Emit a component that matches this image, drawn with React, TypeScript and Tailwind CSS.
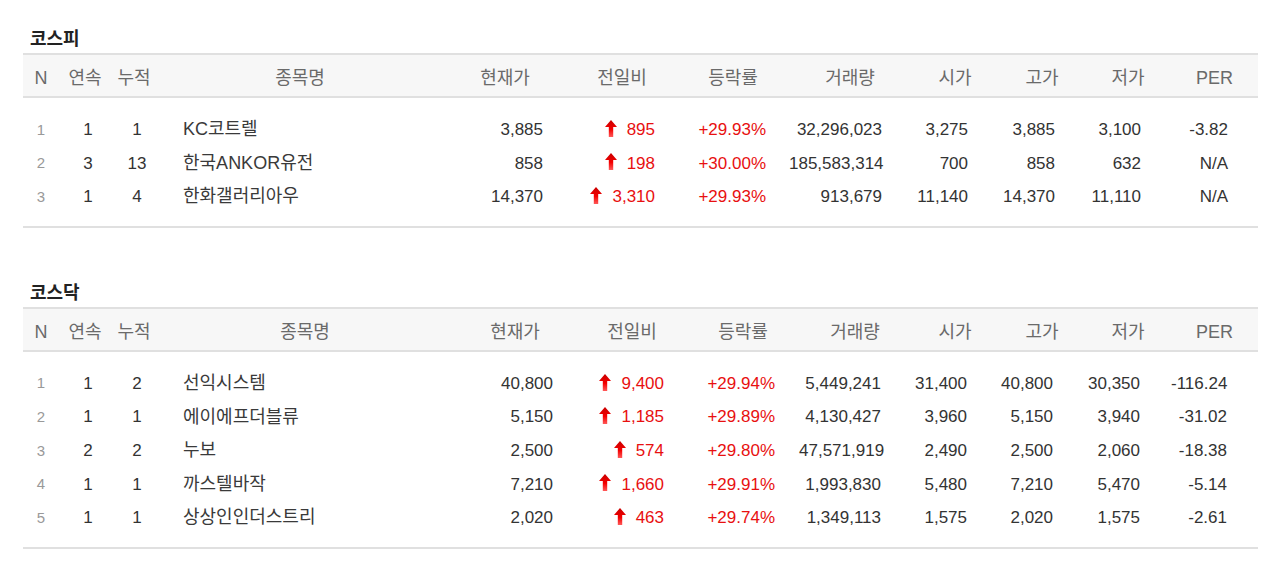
type Row = {
  n: number
  streak: number
  total: number
  name: string
  price: string
  diff: string
  rate: string
  volume: string
  open: string
  high: string
  low: string
  per: string
}

const kospi: Row[] = [
  { n: 1, streak: 1, total: 1, name: "KC코트렐", price: "3,885", diff: "895", rate: "+29.93%", volume: "32,296,023", open: "3,275", high: "3,885", low: "3,100", per: "-3.82" },
  { n: 2, streak: 3, total: 13, name: "한국ANKOR유전", price: "858", diff: "198", rate: "+30.00%", volume: "185,583,314", open: "700", high: "858", low: "632", per: "N/A" },
  { n: 3, streak: 1, total: 4, name: "한화갤러리아우", price: "14,370", diff: "3,310", rate: "+29.93%", volume: "913,679", open: "11,140", high: "14,370", low: "11,110", per: "N/A" },
]

const kosdaq: Row[] = [
  { n: 1, streak: 1, total: 2, name: "선익시스템", price: "40,800", diff: "9,400", rate: "+29.94%", volume: "5,449,241", open: "31,400", high: "40,800", low: "30,350", per: "-116.24" },
  { n: 2, streak: 1, total: 1, name: "에이에프더블류", price: "5,150", diff: "1,185", rate: "+29.89%", volume: "4,130,427", open: "3,960", high: "5,150", low: "3,940", per: "-31.02" },
  { n: 3, streak: 2, total: 2, name: "누보", price: "2,500", diff: "574", rate: "+29.80%", volume: "47,571,919", open: "2,490", high: "2,500", low: "2,060", per: "-18.38" },
  { n: 4, streak: 1, total: 1, name: "까스텔바작", price: "7,210", diff: "1,660", rate: "+29.91%", volume: "1,993,830", open: "5,480", high: "7,210", low: "5,470", per: "-5.14" },
  { n: 5, streak: 1, total: 1, name: "상상인인더스트리", price: "2,020", diff: "463", rate: "+29.74%", volume: "1,349,113", open: "1,575", high: "2,020", low: "1,575", per: "-2.61" },
]

const headers = ["N", "연속", "누적", "종목명", "현재가", "전일비", "등락률", "거래량", "시가", "고가", "저가", "PER"]

function UpArrow() {
  return (
    <svg width="12" height="17" viewBox="0 0 12 17" className="mr-[10px] -mt-[3px] shrink-0">
      <defs>
        <linearGradient id="upArrowGrad" x1="0" y1="0" x2="0" y2="1">
          <stop offset="0%" stopColor="#c80000" />
          <stop offset="55%" stopColor="#f40000" />
          <stop offset="100%" stopColor="#ff5a5a" />
        </linearGradient>
      </defs>
      <path d="M6 0 L12 7 L8.2 7 L8.2 17 L3.8 17 L3.8 7 L0 7 Z" fill="url(#upArrowGrad)" />
    </svg>
  )
}

type TableProps = {
  title: string
  rows: Row[]
  cols: string
  pads: string[]
  top: string
}

function StockTable({ title, rows, cols, pads, top }: TableProps) {
  return (
    <section className={top}>
      <h2 className="h-6 pl-[7px] pt-[2px] text-[18px] leading-6 font-bold text-[#222] mb-1">{title}</h2>
      <div className="border-y-2 border-[#e0e0e0] bg-[#f7f7f7]">
        <div className={`grid ${cols} h-[41px] items-center pt-[6px] text-[18px] text-[#6a6a6a]`}>
          {headers.map((h) => (
            <div key={h} className="text-center">
              {h}
            </div>
          ))}
        </div>
      </div>
      <div className="pt-[13px] pb-[14px] border-b-2 border-[#e0e0e0]">
        {rows.map((r) => (
          <div key={r.n} className={`grid ${cols} h-[33.6px] items-center pt-[4px] text-[17px] text-[#333]`}>
            <div className="text-center text-[15px] text-[#999]">{r.n}</div>
            <div className="text-center pl-[6px]">{r.streak}</div>
            <div className="text-center pl-[6px]">{r.total}</div>
            <div className="pl-[26px] text-[18px] text-[#3a3a3a]">{r.name}</div>
            <div className={`text-right ${pads[0]}`}>{r.price}</div>
            <div className={`flex items-center justify-end text-[#e81010] ${pads[1]}`}>
              <UpArrow />
              <span>{r.diff}</span>
            </div>
            <div className={`text-right text-[#e81010] ${pads[2]}`}>{r.rate}</div>
            <div className={`text-right ${pads[3]}`}>{r.volume}</div>
            <div className={`text-right ${pads[4]}`}>{r.open}</div>
            <div className={`text-right ${pads[5]}`}>{r.high}</div>
            <div className={`text-right ${pads[6]}`}>{r.low}</div>
            <div className={`text-right ${pads[7]}`}>{r.per}</div>
          </div>
        ))}
      </div>
    </section>
  )
}

export default function App() {
  return (
    <main
      className="min-h-screen bg-white pt-[25px]"
      style={{ fontFamily: '"Liberation Sans", "Noto Sans CJK KR", sans-serif' }}
    >
      <div className="ml-[23px] w-[1235px]">
        <StockTable
          title="코스피"
          rows={kospi}
          cols="grid-cols-[36px_52px_46px_286px_124px_110px_112px_122px_88px_86px_86px_87px]"
          pads={["pr-[24px]", "pr-[22px]", "pr-[23px]", "pr-[29px]", "pr-[31px]", "pr-[30px]", "pr-[30px]", "pr-[30px]"]}
          top=""
        />
        <StockTable
          title="코스닥"
          rows={kosdaq}
          cols="grid-cols-[36px_52px_46px_296px_124px_110px_112px_112px_88px_86px_86px_87px]"
          pads={["pr-[24px]", "pr-[23px]", "pr-[24px]", "pr-[30px]", "pr-[32px]", "pr-[32px]", "pr-[31px]", "pr-[31px]"]}
          top="mt-[51px]"
        />
      </div>
    </main>
  )
}
